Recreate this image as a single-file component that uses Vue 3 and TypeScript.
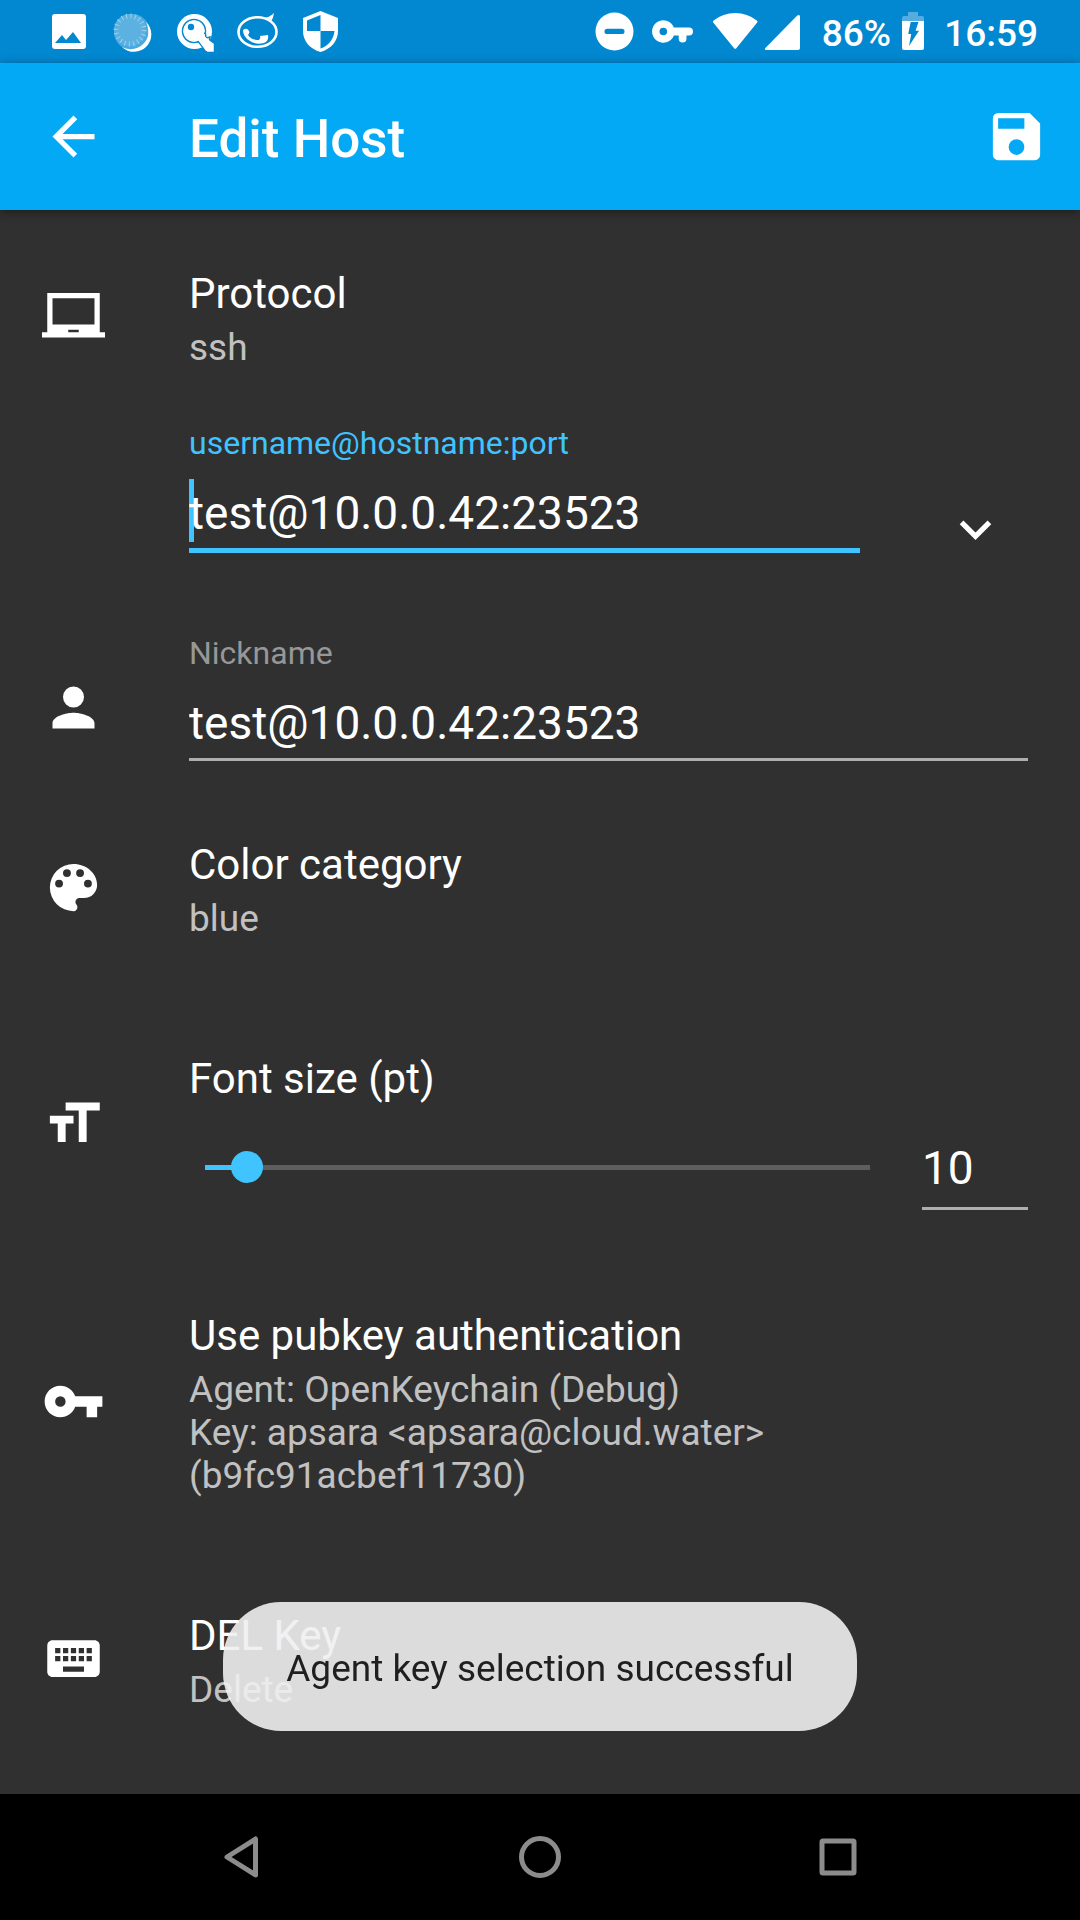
<script setup lang="ts">
import { ref } from 'vue'

const host = ref('test@10.0.0.42:23523')
const nickname = ref('test@10.0.0.42:23523')

const minSize = 8
const maxSize = 40
const fontSize = ref(10)
</script>

<template>
  <div class="screen">
    <div class="status">
      <div class="status-group">
        <svg class="notice" viewBox="0 0 63 63" aria-hidden="true">
          <path fill="#fff" fill-rule="evenodd" d="M18 14h28q3 0 3 3v29q0 3-3 3H18q-3 0-3-3V17q0-3 3-3zM18 43h26l-8-11-7 8-4-5z" />
        </svg>
        <svg class="notice" viewBox="0 0 63 63" aria-hidden="true">
          <circle cx="32" cy="32" r="18" fill="#4aa9de" />
          <path fill="#fff" d="M46 22a17 17 0 0 1-24 25a18 18 0 0 0 26-11q1-8-2-14z" />
          <circle cx="30" cy="30" r="16" fill="#5cb1e1" />
          <circle cx="30" cy="30" r="14" fill="none" stroke="#9bcfed" stroke-width="5" stroke-dasharray="1 3.4" />
        </svg>
        <svg class="notice" viewBox="0 0 63 63" aria-hidden="true">
          <circle cx="31.500" cy="31.500" r="17.500" fill="#fff" />
          <circle cx="31" cy="31" r="11.500" fill="none" stroke="#0288d1" stroke-width="1.500" />
          <path fill="#fff" stroke="#0288d1" stroke-width="1.500" d="M34 40l10 12.500h7.500v-9l-5-3.500.5-3-4 1-.5-4-3-2z" />
          <circle cx="31" cy="31" r="10.500" fill="#fff" />
          <path fill="#fff" d="M33 37l10 14h7v-7l-12-11z" />
          <circle cx="28" cy="27" r="3.200" fill="#0288d1" />
        </svg>
        <svg class="notice" viewBox="0 0 63 63" aria-hidden="true">
          <ellipse cx="31.500" cy="32" rx="19" ry="14.800" fill="none" stroke="#fff" stroke-width="2.600" />
          <path fill="#fff" d="M37 18q6 0 11-5-1 6-3 9z" />
          <path fill="#fff" d="M17 30q4-3 6 1 1 2-1 4 3 5 11 5 2-2 1-4l8-1q1 6-4 8-8 2-14-2-7-4-7-11z" />
        </svg>
        <svg class="notice" viewBox="0 0 63 63" aria-hidden="true">
          <path fill="#fff" fill-rule="evenodd" d="M31.500 11L49 18v13c0 10-7 18-17.500 21C21 49 14 41 14 31V18zM31.500 15L18 20.500V31h13.500zM31.500 31v17.500C39 46 44.500 40 45.500 31z" />
        </svg>
      </div>
      <div class="status-group">
        <svg width="54" height="63" viewBox="588 0 54 63" aria-hidden="true">
          <circle cx="613.500" cy="31.500" r="19" fill="#fff" />
          <rect x="603.500" y="28.700" width="20" height="5.400" rx="2.700" fill="#0288d1" />
        </svg>
        <svg width="60" height="63" viewBox="642 0 60 63" aria-hidden="true">
          <path fill="#fff" fill-rule="evenodd" d="M672.900 27.500A11.300 11.300 0 1 0 672.900 35.500H677.700V38.500a3.900 3.900 0 0 0 7.800 0V35.500H688a4 4 0 0 0 0-8zM662.300 27.700a3.800 3.800 0 1 1 0 7.600a3.800 3.800 0 1 1 0-7.600z" />
        </svg>
        <svg width="58" height="63" viewBox="702 0 58 63" aria-hidden="true">
          <path fill="#fff" d="M712.200 22.500q-.9-1.200.4-2Q722 13 734.200 13t21.600 7.500q1.300.8.400 2L735.500 48q-1.300 1.700-2.600 0z" />
        </svg>
        <svg width="61" height="63" viewBox="760 0 61 63" aria-hidden="true">
          <path fill="#fff" d="M765 50q-2-.5-.6-2L796 15.700q3-1.700 3 1V48q0 2-2 2z" />
        </svg>
        <span class="status-text">86%</span>
        <svg width="53" height="63" viewBox="891 0 53 63" aria-hidden="true">
          <path fill="#55addf" d="M908 12h10v4h4q2 0 2 2v4h-22v-4q0-2 2-2h4z" />
          <path fill="#fff" d="M902 21h22v27q0 2-2 2h-18q-2 0-2-2z" />
          <path fill="#0288d1" d="M910.700 22h7.800l-3 8.700h3.500L909 46l2.200-12h-3z" />
        </svg>
        <span class="status-text">16:59</span>
      </div>
    </div>

    <header class="toolbar">
      <button type="button" class="icon-button" aria-label="Back">
        <svg class="icon" viewBox="0 0 24 24"><path d="M20 11H7.830l5.590-5.590L12 4l-8 8 8 8 1.410-1.410L7.830 13H20z" /></svg>
      </button>
      <h1>Edit Host</h1>
      <button type="button" class="icon-button" aria-label="Save">
        <svg class="icon" viewBox="0 0 24 24"><path d="M17 3H5a2 2 0 0 0-2 2v14a2 2 0 0 0 2 2h14a2 2 0 0 0 2-2V7zm-5 16a3 3 0 1 1 0-6 3 3 0 0 1 0 6zm3-10H5V5h10z" /></svg>
      </button>
    </header>

    <main>
      <button type="button" class="row choice">
        <svg class="icon" viewBox="0 0 24 24" aria-hidden="true"><path d="M22 18V3H2v15H0v2h24v-2zm-8 0h-4v-1h4zm6-3H4V5h16z" /></svg>
        <span class="choice-text">
          <span class="title">Protocol</span>
          <span class="value">ssh</span>
        </span>
      </button>

      <div class="row host">
        <span></span>
        <div class="host-line">
          <div class="field active">
            <label for="host">username@hostname:port</label>
            <div class="input-wrap">
              <span class="caret"></span>
              <input id="host" v-model="host" type="text" />
            </div>
          </div>
          <button type="button" class="icon-button expand" aria-label="Expand host fields">
            <svg class="icon" viewBox="0 0 24 24"><path d="M16.590 8.590L12 13.170 7.410 8.590 6 10l6 6 6-6z" /></svg>
          </button>
        </div>
      </div>

      <div class="row nickname">
        <svg class="icon" viewBox="0 0 24 24" aria-hidden="true"><path d="M12 12a4 4 0 1 0 0-8 4 4 0 0 0 0 8zm0 2c-2.670 0-8 1.340-8 4v2h16v-2c0-2.660-5.330-4-8-4z" /></svg>
        <div class="field">
          <label for="nickname">Nickname</label>
          <input id="nickname" v-model="nickname" type="text" />
        </div>
      </div>

      <button type="button" class="row choice color">
        <svg class="icon" viewBox="0 0 24 24" aria-hidden="true"><path d="M12 3a9 9 0 0 0 0 18c.83 0 1.500-.67 1.500-1.500 0-.39-.15-.74-.39-1.010-.23-.26-.38-.61-.38-.99 0-.83.67-1.500 1.500-1.500H16c2.760 0 5-2.240 5-5 0-4.420-4.030-8-9-8zm-5.500 9a1.500 1.500 0 1 1 0-3 1.500 1.500 0 0 1 0 3zm3-4a1.500 1.500 0 1 1 0-3 1.500 1.500 0 0 1 0 3zm5 0a1.500 1.500 0 1 1 0-3 1.500 1.500 0 0 1 0 3zm3 4a1.500 1.500 0 1 1 0-3 1.500 1.500 0 0 1 0 3z" /></svg>
        <span class="choice-text">
          <span class="title">Color category</span>
          <span class="value">blue</span>
        </span>
      </button>

      <div class="row size">
        <svg class="icon" viewBox="0 0 24 24" aria-hidden="true"><path d="M9 4v3h5v12h3V7h5V4zm-6 8h3v7h3v-7h3V9H3z" /></svg>
        <div>
          <label class="title" for="size">Font size (pt)</label>
          <div class="size-line">
            <input
              id="size"
              v-model.number="fontSize"
              class="slider"
              type="range"
              :min="minSize"
              :max="maxSize"
              :style="{ '--fill': ((fontSize - minSize) / (maxSize - minSize)) * 100 + '%' }"
            />
            <input v-model.number="fontSize" class="size-box" type="text" inputmode="numeric" aria-label="Font size in points" />
          </div>
        </div>
      </div>

      <button type="button" class="row choice pubkey">
        <svg class="icon" viewBox="0 0 24 24" aria-hidden="true"><path d="M12.650 10C11.830 7.670 9.610 6 7 6c-3.310 0-6 2.690-6 6s2.690 6 6 6c2.610 0 4.830-1.670 5.650-4H17v4h4v-4h2v-4zM7 14a2 2 0 1 1 0-4 2 2 0 0 1 0 4z" /></svg>
        <span class="choice-text">
          <span class="title">Use pubkey authentication</span>
          <span class="value">Agent: OpenKeychain (Debug)<br />Key: apsara &lt;apsara@cloud.water&gt;<br />(b9fc91acbef11730)</span>
        </span>
      </button>

      <button type="button" class="row choice del">
        <svg class="icon" viewBox="0 0 24 24" aria-hidden="true"><path d="M20 5H4c-1.100 0-1.990.9-1.990 2L2 17c0 1.100.9 2 2 2h16c1.100 0 2-.9 2-2V7c0-1.100-.9-2-2-2zm-9 3h2v2h-2V8zm0 3h2v2h-2v-2zM8 8h2v2H8V8zm0 3h2v2H8v-2zm-1 2H5v-2h2v2zm0-3H5V8h2v2zm9 7H8v-2h8v2zm0-4h-2v-2h2v2zm0-3h-2V8h2v2zm3 3h-2v-2h2v2zm0-3h-2V8h2v2z" /></svg>
        <span class="choice-text">
          <span class="title">DEL Key</span>
          <span class="value">Delete</span>
        </span>
      </button>
    </main>

    <nav class="system-nav">
      <button type="button" aria-label="System back">
        <svg width="42" height="42" viewBox="0 0 42 42"><path d="M34.500 3v36L6 21z" /></svg>
      </button>
      <button type="button" aria-label="Home">
        <svg width="42" height="42" viewBox="0 0 42 42"><circle cx="21" cy="21" r="18.500" /></svg>
      </button>
      <button type="button" aria-label="Recent apps">
        <svg width="42" height="42" viewBox="0 0 42 42"><rect x="5" y="5" width="32" height="32" rx="1" /></svg>
      </button>
    </nav>

    <div class="toast-layer">
      <div class="toast" role="status">Agent key selection successful</div>
    </div>
  </div>
</template>

<style>
body {
  margin: 0;
  background: #303030;
}
</style>

<style scoped>
.screen {
  display: flex;
  flex-direction: column;
  min-height: 100vh;
  background: #303030;
  color: #fff;
  font-family: Roboto, "Noto Sans", sans-serif;
}

button,
input {
  margin: 0;
  padding: 0;
  border: 0;
  border-radius: 0;
  outline: 0;
  background: none;
  color: inherit;
  font: inherit;
}

svg {
  display: block;
  flex: none;
}

.status {
  display: flex;
  justify-content: space-between;
  height: 63px;
  padding: 0 42px 0 37px;
  background: #0288d1;
}

.status-group {
  display: flex;
  align-items: center;
}

.notice {
  width: 63px;
  height: 63px;
}

.status-text {
  font-size: 37px;
  font-weight: 500;
  line-height: 43px;
  padding-top: 3px;
}

.toolbar {
  display: flex;
  align-items: center;
  height: 147px;
  padding: 0 32px 0 42px;
  background: #03a9f4;
  box-shadow: 0 2px 10px rgba(0, 0, 0, 0.4);
}

.toolbar h1 {
  flex: 1;
  margin: 0;
  padding: 4px 0 0 84px;
  font-size: 53px;
  font-weight: 500;
  line-height: 62px;
}

.icon {
  width: 63px;
  height: 63px;
  fill: currentColor;
}

main {
  flex: 1;
  padding: 54px 52px 83px 42px;
}

.row {
  display: grid;
  grid-template-columns: 63px 1fr;
  column-gap: 84px;
  width: 100%;
  align-items: center;
  text-align: left;
}

.choice-text {
  display: block;
  padding-top: 5px;
}

.title {
  display: block;
  font-size: 42px;
  line-height: 49px;
}

.value {
  display: block;
  margin-top: 8px;
  color: #c1c1c1;
  font-size: 37px;
  line-height: 43px;
}

.host {
  margin-top: 56px;
}

.host-line {
  display: flex;
  align-items: flex-end;
}

.expand {
  margin: 0 21px -8px 84px;
}

.field {
  flex: 1;
  min-width: 0;
}

.field label {
  display: block;
  color: #979797;
  font-size: 32px;
  line-height: 37px;
}

.field input {
  position: relative;
  display: block;
  box-sizing: border-box;
  width: 100%;
  height: 89px;
  padding: 19px 0 4px;
  border-bottom: 3px solid #aeaeae;
  font-size: 46px;
  line-height: 63px;
}

.active label {
  color: #40c4ff;
}

.active input {
  height: 91px;
  border-bottom: 5px solid #40c4ff;
}

.input-wrap {
  position: relative;
}

.caret {
  position: absolute;
  left: 0;
  top: 17px;
  width: 5px;
  height: 63px;
  background: #40c4ff;
}

.nickname {
  margin-top: 82px;
  align-items: end;
}

.nickname .icon {
  margin-bottom: 22px;
}

.color {
  margin-top: 74px;
}

.size {
  margin-top: 114px;
  align-items: start;
}

.size .icon {
  margin-top: 38px;
}

.size-line {
  display: flex;
  align-items: flex-start;
  gap: 36px;
}

.slider {
  -webkit-appearance: none;
  appearance: none;
  flex: 1;
  min-width: 0;
  height: 32px;
  margin-top: 48px;
  padding: 0;
  background:
    linear-gradient(to right, #40c4ff var(--fill), #5e5e5e var(--fill)) center / calc(100% - 32px) 5px no-repeat;
}

.slider::-webkit-slider-thumb {
  -webkit-appearance: none;
  width: 32px;
  height: 32px;
  border-radius: 50%;
  background: #40c4ff;
}

.size-box {
  box-sizing: border-box;
  width: 106px;
  height: 107px;
  padding: 35px 0 9px;
  border-bottom: 3px solid #aeaeae;
  font-size: 46px;
  line-height: 60px;
}

.pubkey {
  margin-top: 96px;
}

.del {
  margin-top: 109px;
}

.system-nav {
  display: flex;
  height: 126px;
  padding: 0 93px;
  background: #000;
}

.system-nav button {
  display: flex;
  flex: 1;
  align-items: center;
  justify-content: center;
}

.system-nav svg {
  fill: none;
  stroke: #8c8c8c;
  stroke-width: 5;
  stroke-linejoin: round;
}

.toast-layer {
  position: fixed;
  right: 0;
  bottom: 189px;
  left: 0;
  display: flex;
  justify-content: center;
  pointer-events: none;
}

.toast {
  padding: 45px 63px 41px;
  border-radius: 58px;
  background: rgba(239, 239, 239, 0.9);
  color: #1f1f1f;
  font-size: 37px;
  line-height: 43px;
}
</style>
